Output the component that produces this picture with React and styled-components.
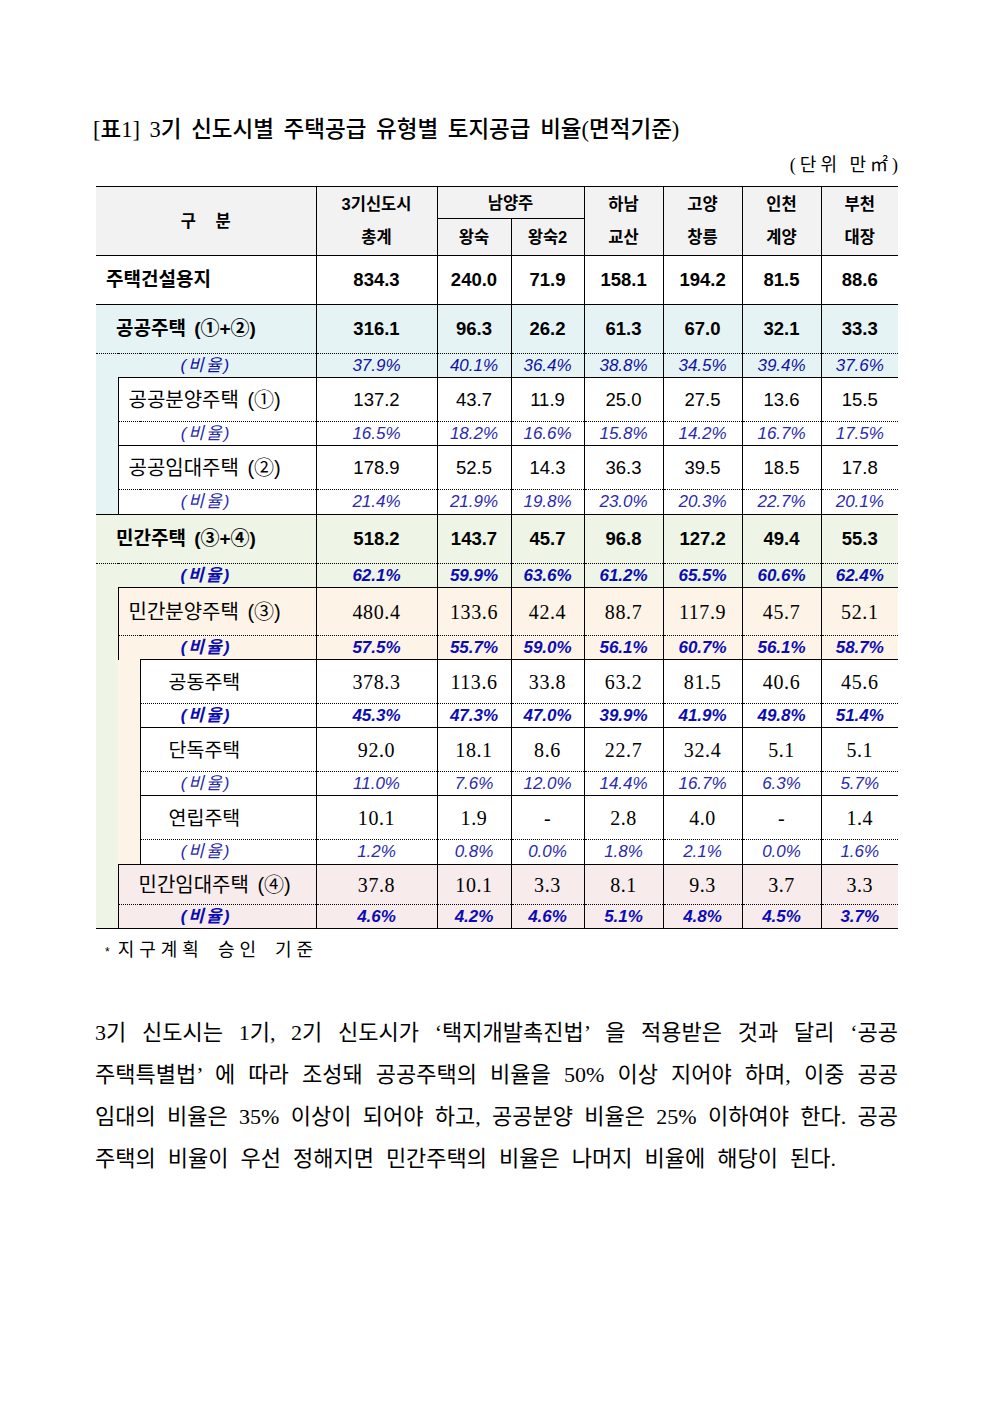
import styled, { createGlobalStyle, css } from "styled-components";

const GlobalStyle = createGlobalStyle`
  body {
    margin: 0;
    background: #fff;
    color: #000;
  }
`;

const SANS = `"Liberation Sans", "Noto Sans CJK KR", sans-serif`;
const SERIF = `"Liberation Serif", "Noto Sans CJK KR", serif`;

const TONE = {
  head: "#f2f2f2",
  cyan: "#e6f3f5",
  green: "#eef4e6",
  orange: "#fdf3e6",
  pink: "#f8ebeb",
};

const Page = styled.div`
  width: 992px;
  min-height: 1403px;
  box-sizing: border-box;
  padding: 115px 94px 0 96px;
`;

const Title = styled.h1`
  margin: 0 0 0 -3px;
  font-family: ${SERIF};
  font-size: 22.5px;
  font-weight: 500;
  line-height: 30px;
  word-spacing: 4px;
`;

const Unit = styled.div`
  margin-top: 8px;
  text-align: right;
  font-family: ${SERIF};
  font-size: 18px;
  line-height: 24px;
  letter-spacing: 4px;
  margin-right: -4px;
`;

const Table = styled.table`
  margin-top: 9px;
  width: 802px;
  border-collapse: collapse;
  table-layout: fixed;
`;

const Col = styled.col`
  width: ${(p) => p.$w}px;
`;

const line = "1px solid #000";
const dots = "1px dotted #000";

const cellBase = css`
  box-sizing: border-box;
  height: ${(p) => p.$h}px;
  padding: 0;
  line-height: 20px;
  border-top: ${(p) => (p.$top === "dotted" ? dots : line)};
  border-left: ${(p) => (p.$outer ? "none" : line)};
  border-bottom: ${(p) => (p.$last ? line : "none")};
  background: ${(p) => p.$bg || "transparent"};
  vertical-align: middle;
  white-space: nowrap;
`;

const HeadCell = styled.th`
  ${cellBase};
  background: ${TONE.head};
  font-family: ${SANS};
  font-size: 16.5px;
  font-weight: 700;
  line-height: ${(p) => (p.$lh ? `${p.$lh}px` : "20px")};
  text-align: center;
  word-spacing: ${(p) => (p.$wide ? "15px" : "normal")};
`;

const labelFonts = {
  bold: css`
    font-size: 19px;
    font-weight: 700;
  `,
  regular: css`
    font-size: 20px;
    font-weight: 400;
  `,
  leaf: css`
    font-size: 19.5px;
    font-weight: 400;
  `,
};

const Label = styled.td`
  ${cellBase};
  font-family: ${SANS};
  ${(p) => labelFonts[p.$font || "regular"]};
  text-align: left;
  padding-left: ${(p) => p.$pad}px;
  word-spacing: 3px;
`;

const valueFonts = {
  bold: css`
    font-family: ${SANS};
    font-size: 18.5px;
    font-weight: 700;
  `,
  sans: css`
    font-family: ${SANS};
    font-size: 18.5px;
  `,
  serif: css`
    font-family: ${SERIF};
    font-size: 20px;
    letter-spacing: 0.6px;
  `,
  ratio: css`
    font-family: ${SANS};
    font-size: 17px;
    font-style: italic;
    color: #1010a6;
  `,
  ratioBold: css`
    font-family: ${SANS};
    font-size: 17px;
    font-style: italic;
    font-weight: 700;
    color: #0c0cb4;
  `,
  ratioLight: css`
    font-family: ${SANS};
    font-size: 17px;
    font-style: italic;
    color: #2a2ab0;
  `,
};

const Value = styled.td`
  ${cellBase};
  ${(p) => valueFonts[p.$kind]};
  text-align: center;
`;

const RatioLabel = styled.td`
  ${cellBase};
  ${(p) => valueFonts[p.$kind]};
  text-align: center;
  padding-right: ${(p) => p.$shift}px;
  letter-spacing: 2px;
`;

const Indent = styled.td`
  box-sizing: border-box;
  padding: 0;
  border: none;
  border-bottom: ${(p) => (p.$last ? line : "none")};
  background: ${(p) => p.$bg};
`;

const Note = styled.div`
  margin-top: 9px;
  padding-left: 9px;
  font-family: ${SANS};
  font-size: 18px;
  line-height: 24px;
  letter-spacing: 5px;
  word-spacing: 4px;
`;

const Star = styled.span`
  font-size: 12px;
  letter-spacing: 8px;
`;

const Paragraph = styled.div`
  margin: 48px 0 0 -1px;
  font-family: ${SERIF};
  font-size: 22px;
  line-height: 42px;
  word-spacing: 1px;
`;

const Line = styled.div`
  text-align: ${(p) => (p.$end ? "left" : "justify")};
  text-align-last: ${(p) => (p.$end ? "left" : "justify")};
  word-spacing: ${(p) => (p.$end ? "6.5px" : "inherit")};
  white-space: nowrap;
`;

const widths = [22, 22, 176, 121, 74, 73, 79, 79, 79, 77];

const totals = ["834.3", "240.0", "71.9", "158.1", "194.2", "81.5", "88.6"];

const data = {
  publicAll: {
    v: ["316.1", "96.3", "26.2", "61.3", "67.0", "32.1", "33.3"],
    r: ["37.9%", "40.1%", "36.4%", "38.8%", "34.5%", "39.4%", "37.6%"],
  },
  publicSale: {
    v: ["137.2", "43.7", "11.9", "25.0", "27.5", "13.6", "15.5"],
    r: ["16.5%", "18.2%", "16.6%", "15.8%", "14.2%", "16.7%", "17.5%"],
  },
  publicRent: {
    v: ["178.9", "52.5", "14.3", "36.3", "39.5", "18.5", "17.8"],
    r: ["21.4%", "21.9%", "19.8%", "23.0%", "20.3%", "22.7%", "20.1%"],
  },
  privateAll: {
    v: ["518.2", "143.7", "45.7", "96.8", "127.2", "49.4", "55.3"],
    r: ["62.1%", "59.9%", "63.6%", "61.2%", "65.5%", "60.6%", "62.4%"],
  },
  privateSale: {
    v: ["480.4", "133.6", "42.4", "88.7", "117.9", "45.7", "52.1"],
    r: ["57.5%", "55.7%", "59.0%", "56.1%", "60.7%", "56.1%", "58.7%"],
  },
  apartment: {
    v: ["378.3", "113.6", "33.8", "63.2", "81.5", "40.6", "45.6"],
    r: ["45.3%", "47.3%", "47.0%", "39.9%", "41.9%", "49.8%", "51.4%"],
  },
  detached: {
    v: ["92.0", "18.1", "8.6", "22.7", "32.4", "5.1", "5.1"],
    r: ["11.0%", "7.6%", "12.0%", "14.4%", "16.7%", "6.3%", "5.7%"],
  },
  rowHouse: {
    v: ["10.1", "1.9", "-", "2.8", "4.0", "-", "1.4"],
    r: ["1.2%", "0.8%", "0.0%", "1.8%", "2.1%", "0.0%", "1.6%"],
  },
  privateRent: {
    v: ["37.8", "10.1", "3.3", "8.1", "9.3", "3.7", "3.3"],
    r: ["4.6%", "4.2%", "4.6%", "5.1%", "4.8%", "4.5%", "3.7%"],
  },
};

function Values({ list, kind, bg, top, h, last }) {
  return list.map((v, i) => (
    <Value key={i} $kind={kind} $bg={bg} $top={top} $h={h} $last={last}>
      {v}
    </Value>
  ));
}

// one "(비율)" line under a value row; the label stays centred on the whole label column
function RatioRow({ list, kind, bg, span, h = 24, last }) {
  return (
    <tr>
      <RatioLabel
        colSpan={span}
        $outer={span === 3}
        $kind={kind}
        $bg={bg}
        $top="dotted"
        $h={h}
        $last={last}
        $shift={(3 - span) * 22}
      >
        (비율)
      </RatioLabel>
      <Values list={list} kind={kind} bg={bg} top="dotted" h={h} last={last} />
    </tr>
  );
}

export default function App() {
  return (
    <Page>
      <GlobalStyle />
      <Title>[표1] 3기 신도시별 주택공급 유형별 토지공급 비율(면적기준)</Title>
      <Unit>(단위 만㎡)</Unit>

      <Table>
        <colgroup>
          {widths.map((w, i) => (
            <Col key={i} $w={w} />
          ))}
        </colgroup>
        <thead>
          <tr>
            <HeadCell colSpan={3} rowSpan={2} $outer $wide>
              구 분
            </HeadCell>
            <HeadCell rowSpan={2} $lh={33}>
              3기신도시
              <br />
              총계
            </HeadCell>
            <HeadCell colSpan={2} $h={32}>
              남양주
            </HeadCell>
            <HeadCell rowSpan={2} $lh={33}>
              하남
              <br />
              교산
            </HeadCell>
            <HeadCell rowSpan={2} $lh={33}>
              고양
              <br />
              창릉
            </HeadCell>
            <HeadCell rowSpan={2} $lh={33}>
              인천
              <br />
              계양
            </HeadCell>
            <HeadCell rowSpan={2} $lh={33}>
              부천
              <br />
              대장
            </HeadCell>
          </tr>
          <tr>
            <HeadCell $h={37}>왕숙</HeadCell>
            <HeadCell $h={37}>왕숙2</HeadCell>
          </tr>
        </thead>
        <tbody>
          <tr>
            <Label colSpan={3} $outer $font="bold" $pad={10} $h={49}>
              주택건설용지
            </Label>
            <Values list={totals} kind="bold" h={49} />
          </tr>

          <tr>
            <Label colSpan={3} $outer $font="bold" $pad={20} $h={49} $bg={TONE.cyan}>
              공공주택 (①+②)
            </Label>
            <Values list={data.publicAll.v} kind="bold" bg={TONE.cyan} h={49} />
          </tr>
          <RatioRow list={data.publicAll.r} kind="ratio" bg={TONE.cyan} span={3} />
          <tr>
            <Indent rowSpan={4} $bg={TONE.cyan} />
            <Label colSpan={2} $pad={10} $h={44}>
              공공분양주택 (①)
            </Label>
            <Values list={data.publicSale.v} kind="sans" h={44} />
          </tr>
          <RatioRow list={data.publicSale.r} kind="ratioLight" span={2} />
          <tr>
            <Label colSpan={2} $pad={10} $h={44}>
              공공임대주택 (②)
            </Label>
            <Values list={data.publicRent.v} kind="sans" h={44} />
          </tr>
          <RatioRow list={data.publicRent.r} kind="ratioLight" span={2} h={25} />

          <tr>
            <Label colSpan={3} $outer $font="bold" $pad={20} $h={49} $bg={TONE.green}>
              민간주택 (③+④)
            </Label>
            <Values list={data.privateAll.v} kind="bold" bg={TONE.green} h={49} />
          </tr>
          <RatioRow list={data.privateAll.r} kind="ratioBold" bg={TONE.green} span={3} />
          <tr>
            <Indent rowSpan={10} $bg={TONE.green} $last />
            <Label colSpan={2} $pad={10} $h={48} $bg={TONE.orange}>
              민간분양주택 (③)
            </Label>
            <Values list={data.privateSale.v} kind="serif" bg={TONE.orange} h={48} />
          </tr>
          <RatioRow list={data.privateSale.r} kind="ratioBold" bg={TONE.orange} span={2} />
          <tr>
            <Indent rowSpan={6} $bg={TONE.orange} />
            <Label $font="leaf" $pad={28} $h={44}>
              공동주택
            </Label>
            <Values list={data.apartment.v} kind="serif" h={44} />
          </tr>
          <RatioRow list={data.apartment.r} kind="ratioBold" span={1} />
          <tr>
            <Label $font="leaf" $pad={28} $h={44}>
              단독주택
            </Label>
            <Values list={data.detached.v} kind="serif" h={44} />
          </tr>
          <RatioRow list={data.detached.r} kind="ratioLight" span={1} />
          <tr>
            <Label $font="leaf" $pad={28} $h={44}>
              연립주택
            </Label>
            <Values list={data.rowHouse.v} kind="serif" h={44} />
          </tr>
          <RatioRow list={data.rowHouse.r} kind="ratioLight" span={1} h={25} />
          <tr>
            <Label colSpan={2} $pad={20} $h={40} $bg={TONE.pink}>
              민간임대주택 (④)
            </Label>
            <Values list={data.privateRent.v} kind="serif" bg={TONE.pink} h={40} />
          </tr>
          <RatioRow list={data.privateRent.r} kind="ratioBold" bg={TONE.pink} span={2} last />
        </tbody>
      </Table>

      <Note>
        <Star>*</Star>지구계획 승인 기준
      </Note>

      <Paragraph>
        <Line>3기 신도시는 1기, 2기 신도시가 ‘택지개발촉진법’ 을 적용받은 것과 달리 ‘공공</Line>
        <Line>주택특별법’ 에 따라 조성돼 공공주택의 비율을 50% 이상 지어야 하며, 이중 공공</Line>
        <Line>임대의 비율은 35% 이상이 되어야 하고, 공공분양 비율은 25% 이하여야 한다. 공공</Line>
        <Line $end>주택의 비율이 우선 정해지면 민간주택의 비율은 나머지 비율에 해당이 된다.</Line>
      </Paragraph>
    </Page>
  );
}
